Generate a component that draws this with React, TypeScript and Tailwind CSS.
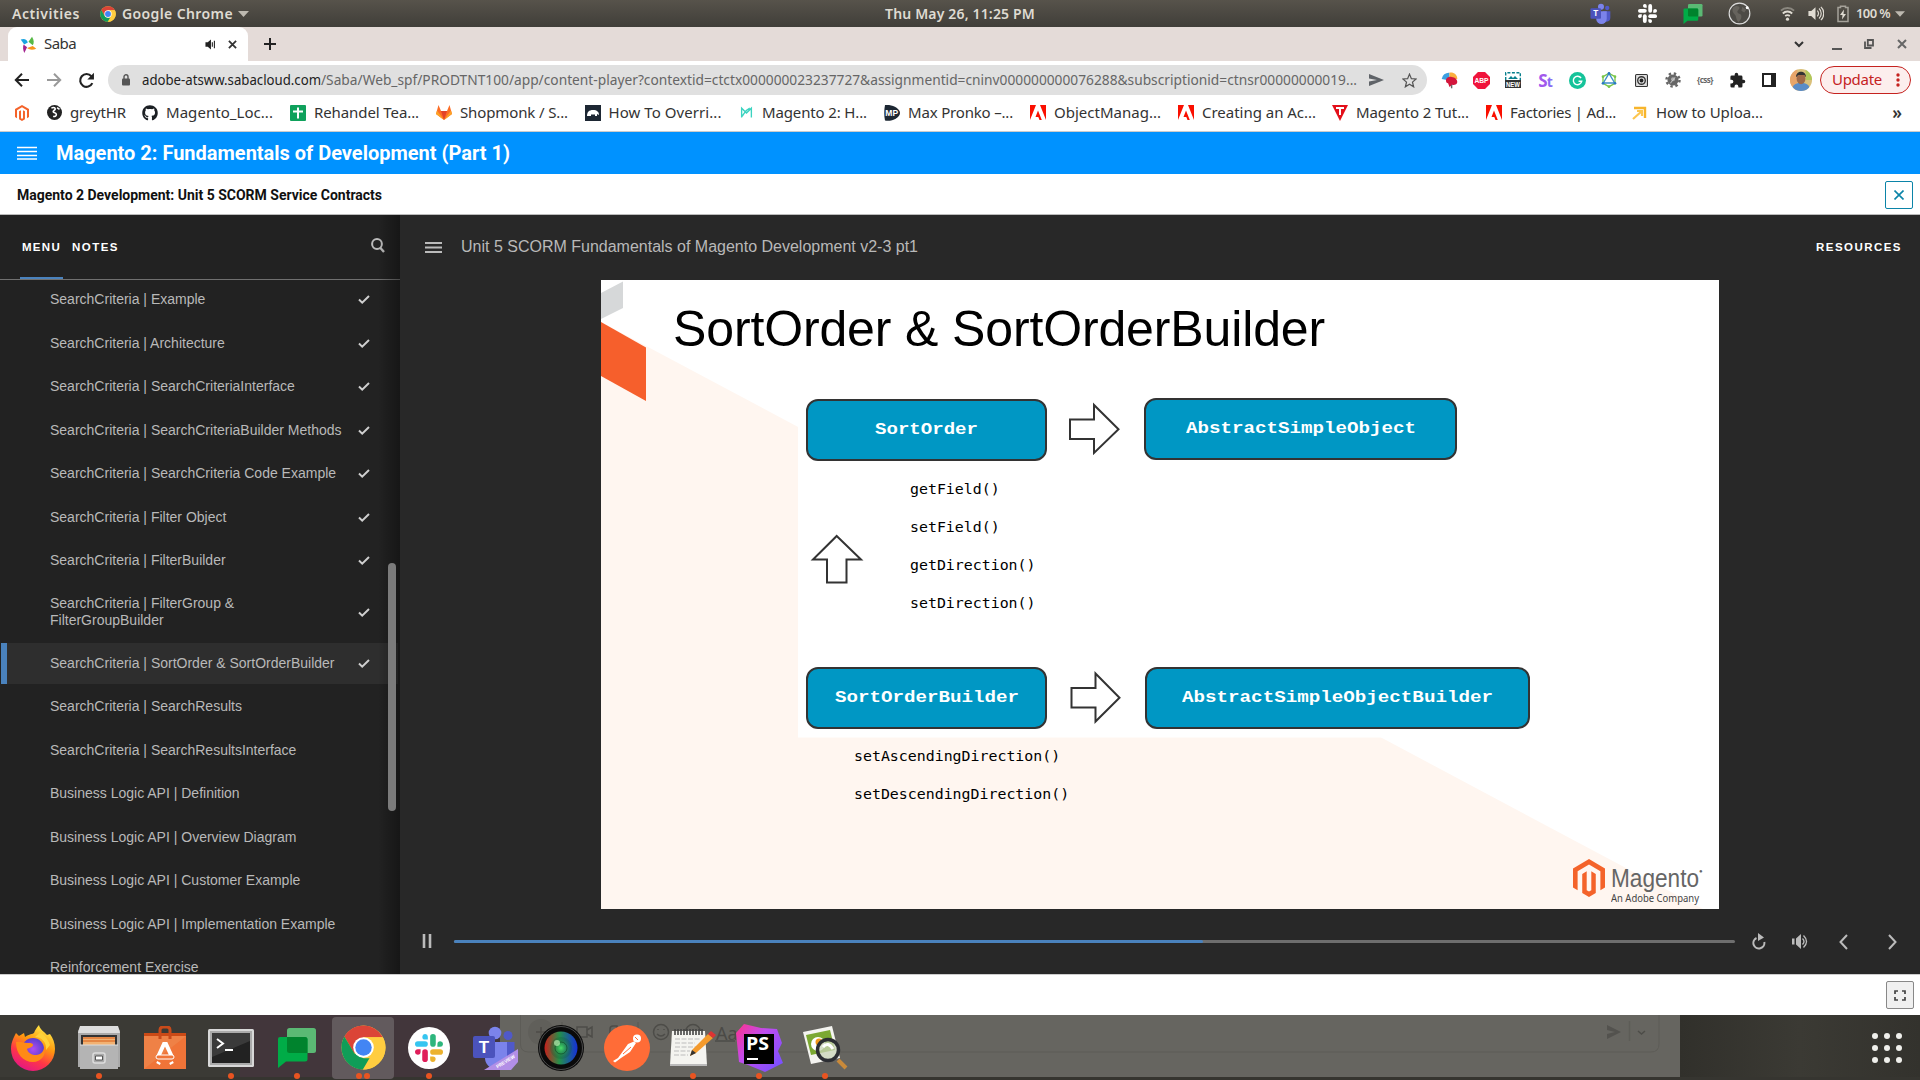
import React, { useLayoutEffect, useRef, useState } from "react";
import { FaGithub, FaGitlab } from "react-icons/fa";

/* Text set to a given width by adjusting its tracking, or its horizontal scale when `squeeze` is on. */
function Fit({ w, children, className = "", squeeze = false }: { w: number; children: string; className?: string; squeeze?: boolean }) {
  const ref = useRef<HTMLSpanElement>(null);
  const [style, setStyle] = useState<React.CSSProperties>({});
  useLayoutEffect(() => {
    const el = ref.current;
    if (!el) return;
    const natural = el.getBoundingClientRect().width;
    if (squeeze) setStyle({ transform: `scaleX(${w / natural})`, transformOrigin: "0 50%" });
    else setStyle({ letterSpacing: `${(w - natural) / children.length}px` });
  }, []);
  return (
    <span className={"block shrink-0 " + className} style={{ width: w }}>
      <span ref={ref} className="inline-block whitespace-pre" style={style}>
        {children}
      </span>
    </span>
  );
}

const Svg = ({ s = 16, h, box = "0 0 24 24", className = "", children }: { s?: number; h?: number; box?: string; className?: string; children: React.ReactNode }) => (
  <svg width={s} height={h ?? s} viewBox={box} className={"block shrink-0 " + className} fill="none">
    {children}
  </svg>
);

function MagentoMark({ s = 16, h = 18 }: { s?: number; h?: number }) {
  return (
    <svg width={s} height={h} viewBox="1.6 0 20.8 24" preserveAspectRatio="none" className="block shrink-0" fill="#f4632a">
      <path d="M12 0 22.4 6v12l-3 1.7V7.7L12 3.4 4.6 7.7v12l-3-1.7V6z" />
      <path d="M12 24l-4.4-2.5V9.4l2.9-1.7v12l1.5.9 1.5-.9v-12l2.9 1.7v12.1z" />
    </svg>
  );
}

function Chrome({ s }: { s: number }) {
  return (
    <Svg s={s} box="0 0 48 48">
      <circle cx="24" cy="24" r="23.5" fill="#ffcd40" />
      <path d="M24 .5A23.5 23.5 0 0 1 44.700 13H24L14 30 3.6 12.3A23.5 23.5 0 0 1 24 .5z" fill="#db4437" />
      <path d="M3.6 12.3 14.2 30 24 35.5h10L23.6 47.5A23.5 23.5 0 0 1 3.6 12.3z" fill="#0f9d58" />
      <path d="M24 13h20.7A23.5 23.5 0 0 1 23.3 47.5L33.8 29.5z" fill="#ffcd40" />
      <circle cx="24" cy="24" r="11" fill="#fff" />
      <circle cx="24" cy="24" r="8.8" fill="#4285f4" />
    </Svg>
  );
}

function SlackMark({ s, mono = false }: { s: number; mono?: boolean }) {
  const [b, g, y, r] = mono ? ["#fff", "#fff", "#fff", "#fff"] : ["#36c5f0", "#2eb67d", "#ecb22e", "#e01e5a"];
  return (
    <Svg s={s}>
      <g fill={b}><rect x="0" y="6.2" width="11" height="4.8" rx="2.4" /><path d="M8.8 0a2.4 2.4 0 0 1 2.2 2.4v2.4H8.6A2.4 2.4 0 0 1 8.8 0z" /></g>
      <g fill={g}><rect x="13" y="0" width="4.8" height="11" rx="2.4" /><path d="M24 8.8A2.4 2.4 0 0 1 21.6 11h-2.4V8.6a2.4 2.4 0 0 1 4.8.2z" /></g>
      <g fill={y}><rect x="13" y="13" width="11" height="4.8" rx="2.4" /><path d="M15.2 24a2.4 2.4 0 0 1-2.2-2.4v-2.4h2.4a2.4 2.4 0 0 1-.2 4.8z" /></g>
      <g fill={r}><rect x="6.2" y="13" width="4.8" height="11" rx="2.4" /><path d="M0 15.2A2.4 2.4 0 0 1 2.4 13h2.4v2.4a2.4 2.4 0 0 1-4.8-.2z" /></g>
    </Svg>
  );
}

function ChatMark({ w, h }: { w: number; h: number }) {
  return (
    <Svg s={w} h={h} box="0 0 38 40">
      <rect x="9" y="0" width="29" height="25" rx="2.5" fill="#5bb974" />
      <path d="M2 9h25a2.500 2.500 0 0 1 2.500 2.500V31a2.500 2.500 0 0 1-2.500 2.500H8L0 40V11a2 2 0 0 1 2-2z" fill="#00ac47" />
      <path d="M9 9h18a2.500 2.500 0 0 1 2.500 2.500V25H11.500A2.500 2.500 0 0 1 9 22.500z" fill="#00832d" />
    </Svg>
  );
}

function TeamsMark({ s, preview = false }: { s: number; preview?: boolean }) {
  return (
    <Svg s={s} box="0 0 46 46">
      <circle cx="36" cy="10.500" r="4.500" fill="#5059c9" />
      <path d="M27 17h15.500v14a8 8 0 0 1-8 8H27z" fill="#5059c9" />
      <circle cx="23" cy="8" r="6.300" fill="#7b83eb" />
      <path d="M13 17h22v16a11 11 0 0 1-22 0z" fill="#7b83eb" />
      <rect x="1" y="11" width="22" height="22" rx="2" fill="#4b53bc" />
      <text x="12" y="28" textAnchor="middle" fontFamily="Liberation Sans" fontWeight="700" fontSize="17" fill="#fff">T</text>
      {preview && (
        <>
          <path d="M12 45 46 24v13l-7 8z" fill="#b28fe6" />
          <text transform="translate(25.500 43.500) rotate(-32)" fontFamily="Liberation Sans" fontWeight="700" fontSize="5" textLength="21" lengthAdjust="spacingAndGlyphs" fill="#fff">PREVIEW</text>
        </>
      )}
    </Svg>
  );
}

const Cell = ({ w = 32, children }: { w?: number; children: React.ReactNode }) => (
  <div className="flex shrink-0 items-center justify-center" style={{ width: w }}>{children}</div>
);

const Speaker = ({ s, c }: { s: number; c: string }) => (
  <Svg s={s}>
    <path d="M2 8.500h4L12 3v18l-6-5.500H2z" fill={c} />
    <path d="M14.500 8a5.500 5.500 0 0 1 0 8M17 5a9.500 9.500 0 0 1 0 14M19.600 2.600a13 13 0 0 1 0 18.800" stroke={c} strokeWidth="1.700" />
  </Svg>
);

function TopBar() {
  return (
    <div className="flex h-[27px] shrink-0 items-center bg-gradient-to-b from-[#57534b] to-[#403e39] text-[14px] font-semibold text-[#dfdbd2]">
      <div className="flex w-[885px] items-center pl-3">
        <Fit w={68}>Activities</Fit>
        <div className="ml-5 mr-[6px]"><Chrome s={16} /></div>
        <Fit w={111}>Google Chrome</Fit>
        <Svg s={11} h={6} box="0 0 11 6" className="ml-[5px]"><path d="M0 0h11L5.500 6z" fill="#bdb9b0" /></Svg>
      </div>
      <Fit w={150} className="-mt-px">Thu May 26, 11:25 PM</Fit>
      <div className="ml-[543px] flex items-center">
        <Cell w={46}><TeamsMark s={22} /></Cell>
        <Cell w={46}><SlackMark s={19} mono /></Cell>
        <Cell w={46}><ChatMark w={20} h={20} /></Cell>
        <Cell w={46}>
          <Svg s={23}><circle cx="12" cy="12" r="10.800" fill="#4d4b46" stroke="#ddd" strokeWidth="1.200" /><path d="M5 6c3-3 7-2 7 0s-3 3-2 5 4 1 4 4-2 5-3 6c-3-3-2-6-4-8S4 9 5 6zM15 5l4 3-2 3-3-2z" fill="#66635d" /><circle cx="20" cy="6" r="1.500" fill="#fff" /></Svg>
        </Cell>
        <div className="ml-[18px] w-[27px]"><Svg s={15} box="0 0 16 16"><path d="M1 5a10 10 0 0 1 14 0" stroke="#8a877f" strokeWidth="2" /><path d="M3 8a7 7 0 0 1 10 0" stroke="#dfdbd2" strokeWidth="2" /><path d="M5.500 10.700a4 4 0 0 1 5 0" stroke="#dfdbd2" strokeWidth="1.800" /><circle cx="8" cy="14" r="1.700" fill="#dfdbd2" /></Svg></div>
        <div className="w-[30px]"><Speaker s={17} c="#dfdbd2" /></div>
        <Svg s={12} h={18} box="0 0 12 17"><path d="M3.500 2V.8h5V2H11v14H1V2z" stroke="#a5a29a" strokeWidth="1.500" /><path d="M7 4 3 9.500h2.500L5 14l4-5.500H6.500z" fill="#dfdbd2" /></Svg>
        <Fit w={34} className="ml-[7px] text-[13px]">100 %</Fit>
        <Svg s={10} h={6} box="0 0 11 6" className="ml-[5px]"><path d="M0 0h11L5.500 6z" fill="#bdb9b0" /></Svg>
      </div>
    </div>
  );
}

function TabStrip() {
  return (
    <div className="flex h-[34px] shrink-0 items-center bg-[#e4dbd8] pl-2 text-[15px] text-[#333]">
      <div className="flex h-full w-[240px] items-center rounded-t-[9px] bg-white pl-3">
        <Svg s={17}>
          <path d="M1 5c5-2 9 0 10 4L6 12z" fill="#1ba4e0" /><path d="M5 12l5 4-4 8c-2-5-2-8-1-12z" fill="#a3238e" />
          <path d="M10 17l8-3 5 4c-5 2-9 2-13-1z" fill="#f7941e" /><path d="M12 8l5-7c3 5 3 9 1 12z" fill="#57b947" />
        </Svg>
        <Fit w={32} className="-mt-[2px] ml-[7px]">Saba</Fit>
        <Svg s={11} className="ml-[129px]"><path d="M1 7h5l7-6v22l-7-6H1z" fill="#222" /><path d="M16 7v10M20.500 4v16" stroke="#222" strokeWidth="2.400" /></Svg>
        <Svg s={9} box="0 0 10 10" className="ml-3"><path d="M1 1l8 8M9 1 1 9" stroke="#333" strokeWidth="2" /></Svg>
      </div>
      <Svg s={12} box="0 0 12 12" className="ml-4"><path d="M6 0v12M0 6h12" stroke="#222" strokeWidth="2" /></Svg>
      <div className="ml-auto flex items-center pr-[13px]">
        <Svg s={10} h={7} box="0 0 10 7" className="mr-[28px]"><path d="M1 1l4 4 4-4" stroke="#333" strokeWidth="2" /></Svg>
        <Svg s={10} h={11} box="0 0 10 11" className="mr-[22px]"><path d="M0 10h10" stroke="#555" strokeWidth="2" /></Svg>
        <Svg s={10} box="0 0 10 10" className="mr-[23px]"><path d="M3.800 1h5.200v5.500H3.800zM1 2.500V9h6.500" stroke="#555" strokeWidth="1.800" /></Svg>
        <Svg s={10} box="0 0 10 10"><path d="M1 1l8 8M9 1 1 9" stroke="#666" strokeWidth="2" /></Svg>
      </div>
    </div>
  );
}

function Toolbar() {
  return (
    <div className="flex h-[37px] shrink-0 items-center bg-white pb-px pt-0.5 text-[15px]">
      <div className="ml-[14px] w-[32px]"><Svg s={16} box="0 0 16 16"><path d="M15 8H2M8 1.800 1.800 8 8 14.200" stroke="#222" strokeWidth="2" /></Svg></div>
      <div className="w-[32px]"><Svg s={16} box="0 0 16 16"><path d="M1 8h13M8 1.800 14.200 8 8 14.200" stroke="#999" strokeWidth="2" /></Svg></div>
      <Svg s={17} box="0 0 16 16"><path d="M13.500 10.500A6 6 0 1 1 12.600 4" stroke="#222" strokeWidth="2" /><path d="M15 .8V7H8.800z" fill="#222" /></Svg>
      <div className="ml-[13px] flex h-[30px] w-[1319px] shrink-0 items-center rounded-full bg-[#e0e0e0] pl-[14px]">
        <Svg s={8} h={12} box="0 0 8 12"><path d="M2 5V2.800a2 2 0 0 1 4 0V5" stroke="#555" strokeWidth="1.400" /><rect y="4.500" width="8" height="7" rx="1" fill="#555" /></Svg>
        <Fit w={179} squeeze className="-mt-px ml-[12px] text-[#222]">adobe-atsww.sabacloud.com</Fit>
        <Fit w={1036} squeeze className="-mt-px text-[#666]">/Saba/Web_spf/PRODTNT100/app/content-player?contextid=ctctx000000023237727&assignmentid=cninv000000000076288&subscriptionid=ctnsr00000000019...</Fit>
        <Svg s={15} h={12} box="0 0 15 12" className="ml-[12px]"><path d="M0 0l15 6-15 6V7.500L8 6 0 4.500z" fill="#5f6368" /></Svg>
        <Svg s={15} className="ml-[18px]"><path d="M12 1.800l3 7.200 7.600.6-5.800 5 1.800 7.500L12 18l-6.600 4.100 1.800-7.500-5.800-5L9 9z" stroke="#555" strokeWidth="2" /></Svg>
      </div>
      <div className="ml-[6px] flex items-center">
        <Cell><Svg s={17}><path d="M12 1a10 10 0 0 0-11 9l11 2z" fill="#3b9fe0" /><path d="M12 1c6-1 11 3 11 9l-11 2z" fill="#fbb040" /><path d="M7 12c0-5 6-6 8-5 5 0 8 4 8 7s-4 5-7 4l-4 3-2-5c-2 0-3-2-3-4z" fill="#d3163c" /><path d="M15 18v5" stroke="#666" strokeWidth="2" /></Svg></Cell>
        <Cell><Svg s={17}><path d="M7 0h10l7 7v10l-7 7H7l-7-7V7z" fill="#f0143c" /><text x="12" y="16" textAnchor="middle" fontSize="10.500" fontWeight="700" fontFamily="Liberation Sans" textLength="20" lengthAdjust="spacingAndGlyphs" fill="#fff">ABP</text></Svg></Cell>
        <Cell><Svg s={16} box="0 0 16 16"><path d="M.7 8V.7h14.600V8" stroke="#087f8c" strokeWidth="1.400" strokeDasharray="3 1.500" /><path d="M3 7l3-3 2 2 2-2 3 3z" fill="#087f8c" /><rect y="8" width="16" height="8" fill="#333" /><text x="8" y="14.800" textAnchor="middle" fontSize="7.500" fontWeight="700" fontFamily="Liberation Sans" textLength="14" lengthAdjust="spacingAndGlyphs" fill="#fff">NEW</text></Svg></Cell>
        <Cell><span className="text-[17px] font-bold leading-none tracking-[-1px] text-[#a259ec]">S<span className="text-[14px] text-[#8a6cf5]">t</span></span></Cell>
        <Cell><Svg s={17}><circle cx="12" cy="12" r="12" fill="#15c39a" /><path d="M17 8.500A6 6 0 1 0 18 13h-4.500" stroke="#fff" strokeWidth="2" /></Svg></Cell>
        <Cell><Svg s={16}><path d="M12 2l9 5v10l-9 5-9-5V7z" stroke="#7ac64a" strokeWidth="2" /><path d="M12 2l8.500 14.500h-17z" stroke="#3e8fc8" strokeWidth="2" /><g fill="#2b7abf"><circle cx="12" cy="2" r="2" /><circle cx="21" cy="17" r="2" /><circle cx="3" cy="17" r="2" /></g><g fill="#7ac64a"><circle cx="12" cy="22" r="2" /><circle cx="21" cy="7" r="2" /><circle cx="3" cy="7" r="2" /></g></Svg></Cell>
        <Cell><Svg s={13}><rect x="1" y="1" width="22" height="22" rx="2" fill="#ddd" stroke="#333" strokeWidth="2" /><circle cx="12" cy="12" r="7" stroke="#333" strokeWidth="2.500" /><circle cx="12" cy="12" r="3.500" fill="#222" /></Svg></Cell>
        <Cell><Svg s={16}><circle cx="12" cy="12" r="8.300" fill="#666" /><circle cx="12" cy="12" r="9.800" stroke="#666" strokeWidth="3.600" strokeDasharray="3.600 4.100" /><circle cx="12" cy="11" r="3" fill="#aaa" /><path d="M8 17l7-9" stroke="#ccc" strokeWidth="1.500" /></Svg></Cell>
        <Cell><span className="text-[8px] font-bold tracking-[-0.500px] text-[#666]">{"{css}"}</span></Cell>
        <Cell><Svg s={17}><path d="M20.500 11H19V7a2 2 0 0 0-2-2h-4V3.500a2.500 2.500 0 0 0-5 0V5H4a2 2 0 0 0-2 2v3.800h1.500a2.700 2.700 0 0 1 0 5.400H2V20a2 2 0 0 0 2 2h3.800v-1.500a2.700 2.700 0 0 1 5.400 0V22H17a2 2 0 0 0 2-2v-4h1.500a2.500 2.500 0 0 0 0-5z" fill="#222" /></Svg></Cell>
        <Cell><Svg s={14} box="0 0 14 14"><rect x="1" y="1" width="12" height="12" stroke="#222" strokeWidth="2" /><rect x="9" y="1" width="4" height="12" fill="#222" /></Svg></Cell>
        <Cell><Svg s={22}><clipPath id="avatar"><circle cx="12" cy="12" r="12" /></clipPath><g clipPath="url(#avatar)"><path d="M0 0h24v24H0z" fill="#d9c07a" /><path d="M0 0h8v24H0z" fill="#e8a56a" /><path d="M17 0h7v12h-7z" fill="#b0c85a" /><path d="M2 24c0-7 5-9 10-9s10 2 10 9z" fill="#5a8cc8" /><ellipse cx="12" cy="10.500" rx="4.800" ry="6" fill="#a06a48" /><path d="M6.500 9c0-8 11-8 11 0l-2-2.500H9z" fill="#333" /></g></Svg></Cell>
      </div>
      <div className="ml-[3px] flex h-[28px] w-[91px] items-center rounded-full border border-[#c5221f] bg-[#fceeed] pl-[11px] text-[#c5221f]">
        <Fit w={50} className="-mt-px">Update</Fit>
        <Svg s={4} h={14} box="0 0 4 14" className="ml-[14px]"><g fill="#c5221f"><circle cx="2" cy="2" r="1.700" /><circle cx="2" cy="7" r="1.700" /><circle cx="2" cy="12" r="1.700" /></g></Svg>
      </div>
    </div>
  );
}

const Adobe = () => (
  <Svg s={16} h={15} box="0 0 16 15"><path d="M0 0h6L0 15zM10 0h6v15zM8 5.500 11.800 15H9.500L8.300 12H5.500z" fill="#fa0f00" /></Svg>
);

const bookmarks: { icon: React.ReactNode; text: string; w: number; slot: number }[] = [
  { icon: <Svg s={15}><circle cx="12" cy="12" r="12" fill="#222" /><path d="M7 5c4-2 7 0 6 2s-4 2-3 4 5 1 5 4-3 4-5 3M16 4l4 3" stroke="#fff" strokeWidth="2.500" /></Svg>, text: "greytHR", w: 56, slot: 96 },
  { icon: <FaGithub size={16} color="#1b1f23" />, text: "Magento_Loc...", w: 107, slot: 148 },
  { icon: <Svg s={16} box="0 0 16 16"><rect width="16" height="16" rx="1" fill="#0fa15c" /><path d="M8 2.500v11M3 6.500h10" stroke="#fff" strokeWidth="2" /></Svg>, text: "Rehandel Tea...", w: 105, slot: 146 },
  { icon: <Svg s={16} h={15} box="0 0 16 15"><path d="M8 15 0 9l2.500-9L5 6h6l2.500-6L16 9z" fill="#fc6d26" /><path d="M8 15 5 6h6z" fill="#e24329" /><path d="M8 15 0 9l1-3.500zM8 15l8-6-1-3.500z" fill="#fca326" /></Svg>, text: "Shopmonk / S...", w: 108, slot: 148.500 },
  { icon: <Svg s={16} box="0 0 16 16"><rect width="16" height="16" fill="#1d2733" /><path d="M2 11c0-4 2-6 6-6s6 2 6 5l-2-1v2h-2V9.500H6V11z" fill="#fff" /></Svg>, text: "How To Overri...", w: 113, slot: 153.500 },
  { icon: <Svg s={13}><path d="M3 21V4l9 9 9-9v17M3 20c5-5 6-12 15-16" stroke="#3cd3c0" strokeWidth="2.500" /></Svg>, text: "Magento 2: H...", w: 105, slot: 146 },
  { icon: <Svg s={16} box="0 0 16 16"><path d="M1 0c6-1 15 3 15 8S7 17 1 15.500Q-.5 8 1 0z" fill="#1d2733" /><text x="7.700" y="11" textAnchor="middle" fontSize="8.500" fontWeight="700" fontFamily="Liberation Sans" fill="#fff">MP</text></Svg>, text: "Max Pronko –...", w: 105, slot: 146 },
  { icon: <Adobe />, text: "ObjectManag...", w: 107, slot: 148 },
  { icon: <Adobe />, text: "Creating an Ac...", w: 114, slot: 154 },
  { icon: <Svg s={16} box="0 0 16 16"><path d="M0 0h16L8 16z" fill="#e3101a" /><path d="M4 3h8M8 3v7" stroke="#fff" strokeWidth="2" /></Svg>, text: "Magento 2 Tut...", w: 113, slot: 154 },
  { icon: <Adobe />, text: "Factories | Ad...", w: 106, slot: 146 },
  { icon: <Svg s={16} box="0 0 16 16"><path d="M2 3h11v10" stroke="#f7b52c" strokeWidth="2.400" /><path d="M1 14l9-8M5 6h5v5" stroke="#fcc650" strokeWidth="2.200" /></Svg>, text: "How to Uploa...", w: 107, slot: 148 },
];

function Bookmarks() {
  return (
    <div className="flex h-[34px] shrink-0 items-center border-b border-[#ccc] bg-white pb-[4px] text-[15px] text-[#333]">
      <div className="ml-[15px] mr-[24px]"><MagentoMark s={14} h={16} /></div>
      <div className="-ml-[7px] flex">
        {bookmarks.map((b) => (
          <div key={b.text} className="flex items-center" style={{ width: b.slot }}>
            <div className="mr-2 flex w-4 justify-center">{b.icon}</div>
            <Fit w={b.w} className="-mt-px">{b.text}</Fit>
          </div>
        ))}
      </div>
      <span className="ml-auto mr-[18px] text-[17px] font-semibold leading-none">»</span>
    </div>
  );
}

function CourseHeader() {
  return (
    <>
      <div className="flex h-[42px] shrink-0 items-center bg-[#0092ff] pl-[17px] font-[Roboto] text-white">
        <Svg s={20} h={14} box="0 0 20 14"><path d="M0 1.500h20M0 5.500h20M0 9.500h20M0 13h20" stroke="#fff" strokeWidth="1.300" /></Svg>
        <Fit w={454} className="ml-[19px] text-[20px] font-bold">Magento 2: Fundamentals of Development (Part 1)</Fit>
      </div>
      <div className="flex h-[41px] shrink-0 items-center border-b border-[#bbb] bg-white pl-[17px] pr-[7px] pt-px font-[Roboto] text-[14px] font-bold text-[#111]">
        <Fit w={365} className="mt-px">Magento 2 Development: Unit 5 SCORM Service Contracts</Fit>
        <div className="ml-auto flex h-7 w-7 items-center justify-center rounded-[2px] border border-[#0b84a8]">
          <Svg s={10} box="0 0 10 10"><path d="M.5.500l9 9M9.500.500l-9 9" stroke="#0b84a8" strokeWidth="1.600" /></Svg>
        </div>
      </div>
    </>
  );
}

const lessons: { text: string; done?: boolean; active?: boolean; tall?: boolean }[] = [
  { text: "SearchCriteria | Example", done: true },
  { text: "SearchCriteria | Architecture", done: true },
  { text: "SearchCriteria | SearchCriteriaInterface", done: true },
  { text: "SearchCriteria | SearchCriteriaBuilder Methods", done: true },
  { text: "SearchCriteria | SearchCriteria Code Example", done: true },
  { text: "SearchCriteria | Filter Object", done: true },
  { text: "SearchCriteria | FilterBuilder", done: true },
  { text: "SearchCriteria | FilterGroup &\nFilterGroupBuilder", done: true, tall: true },
  { text: "SearchCriteria | SortOrder & SortOrderBuilder", done: true, active: true },
  { text: "SearchCriteria | SearchResults" },
  { text: "SearchCriteria | SearchResultsInterface" },
  { text: "Business Logic API | Definition" },
  { text: "Business Logic API | Overview Diagram" },
  { text: "Business Logic API | Customer Example" },
  { text: "Business Logic API | Implementation Example" },
  { text: "Reinforcement Exercise" },
];

function Sidebar() {
  return (
    <div className="relative flex w-[400px] shrink-0 flex-col overflow-hidden bg-[#222]">
      <div className="flex h-[65px] shrink-0 border-b border-[#707070] text-[11.500px] font-bold text-white">
        <div className="ml-5 flex w-[43px] flex-col items-center border-b-2 border-[#4a82bd] pt-[24px]"><Fit w={39}>MENU</Fit></div>
        <Fit w={47} className="ml-[9px] pt-[24px]">NOTES</Fit>
        <Svg s={14} h={15} box="0 0 14 15" className="ml-auto mr-[15px] mt-[23px]"><circle cx="6" cy="6" r="4.900" stroke="#bbb" strokeWidth="2" /><path d="M9 9.500l4 4.500" stroke="#bbb" strokeWidth="2.400" /></Svg>
      </div>
      <div className="min-h-0 flex-1 overflow-hidden">
        <div className="-mt-[2px]">
          {lessons.map((l) => (
            <div key={l.text} className={l.tall ? "flex h-[59px] items-center" : "flex h-[43.500px] items-center"}>
              <div className={l.active ? "ml-px flex h-[41px] w-[397px] items-center border-l-[6px] border-[#4a82bd] bg-[#2e2e2e] pl-[43px]" : "flex h-[41px] w-[398px] items-center pl-[50px]"}>
                <span className="w-[308px] whitespace-pre text-[14px] leading-[16.800px] text-[#b9b9b9]">{l.text}</span>
                {l.done && <Svg s={12} h={9} box="0 0 12 9"><path d="M1 4.500 4.200 7.600 11 1" stroke="#cfcfcf" strokeWidth="2" /></Svg>}
              </div>
            </div>
          ))}
        </div>
      </div>
      <div className="pointer-events-none absolute inset-y-0 right-0 w-[22px] bg-gradient-to-r from-transparent to-black/35" />
      <div className="absolute right-1 top-[348px] h-[248px] w-2 rounded-full bg-[#7b7b7b]" />
    </div>
  );
}

const nodes = [
  { cls: "left-[205px] top-[119px] w-[241px]", text: "SortOrder", w: 103 },
  { cls: "left-[543px] top-[118px] w-[313px]", text: "AbstractSimpleObject", w: 230 },
  { cls: "left-[205px] top-[387px] w-[241px]", text: "SortOrderBuilder", w: 184 },
  { cls: "left-[544px] top-[387px] w-[385px]", text: "AbstractSimpleObjectBuilder", w: 311 },
];

const methods = [
  { cls: "left-[309px] top-[199px]", text: "getField()" },
  { cls: "left-[309px] top-[237px]", text: "setField()" },
  { cls: "left-[309px] top-[275px]", text: "getDirection()" },
  { cls: "left-[309px] top-[313px]", text: "setDirection()" },
  { cls: "left-[253px] top-[466px]", text: "setAscendingDirection()" },
  { cls: "left-[253px] top-[504px]", text: "setDescendingDirection()" },
];

function Slide() {
  return (
    <div className="relative ml-[201px] h-[629px] w-[1118px] shrink-0 overflow-hidden bg-white text-black">
      <svg width="1118" height="629" viewBox="0 0 1118 629" className="absolute inset-0">
        <path d="M0 42 1102 629H0z" fill="#fff6f0" />
        <path d="M197 60h620v397.500H197z" fill="#fff" />
        <path d="M0 42 45 67.500V121L0 96z" fill="#f65f2c" />
        <path d="M0 13 22 1.500V28L0 39z" fill="#d6d8d9" />
        <g fill="#fff" stroke="#333" strokeWidth="2">
          <path d="M469 139.500h24V125l24.500 24.300L493 173v-14h-24z" />
          <path d="M470.500 408h24V393.500l24 24.300L494.500 441.500v-14h-24z" />
          <path d="M235.700 256 260 279.500h-14.500V302.500h-19.500V279.500H212z" />
        </g>
      </svg>
      <Fit w={652} className="absolute left-[72px] top-[19px] text-[50px] leading-[60px]">SortOrder & SortOrderBuilder</Fit>
      {nodes.map((n) => (
        <div key={n.text} className={"absolute flex h-[62px] items-center justify-center rounded-[12px] border-2 border-[#333] bg-[#0097c4] font-['Liberation_Mono'] text-[17px] font-bold text-white " + n.cls}>
          <Fit w={n.w} squeeze>{n.text}</Fit>
        </div>
      ))}
      {methods.map((m) => (
        <span key={m.text} className={"absolute font-['DejaVu_Sans_Mono'] text-[14.900px] leading-[20px] " + m.cls}>{m.text}</span>
      ))}
      <div className="absolute left-[972px] top-[579px]"><MagentoMark s={32} h={38} /></div>
      <Fit w={88} squeeze className="absolute left-[1010px] top-[582px] text-[26px] leading-[32px] text-[#666]">Magento</Fit>
      <Fit w={88} squeeze className="absolute left-[1010px] top-[611px] font-['Noto_Sans'] text-[11px] leading-[14px] text-[#444]">An Adobe Company</Fit>
      <span className="absolute left-[1098px] top-[588px] text-[6px] leading-none text-[#666]">●</span>
    </div>
  );
}

function Player() {
  return (
    <div className="flex min-w-0 flex-1 flex-col bg-[#282828] text-[#b9b9b9]">
      <div className="flex h-[65px] shrink-0 items-center pl-[25px] pr-[18px]">
        <Svg s={17} h={11} box="0 0 17 11" className="-mt-px"><path d="M0 1h17M0 5.500h17M0 10h17" stroke="#bbb" strokeWidth="2" /></Svg>
        <Fit w={457} className="-mt-[2px] ml-[19px] text-[16px]">Unit 5 SCORM Fundamentals of Magento Development v2-3 pt1</Fit>
        <Fit w={86} className="ml-auto mt-px text-[11.500px] font-bold text-white">RESOURCES</Fit>
      </div>
      <Slide />
      <div className="flex h-[65px] items-center pb-px pl-[22px]">
        <Svg s={10} h={14} box="0 0 10 14"><path d="M2 0v14M8 0v14" stroke="#bbb" strokeWidth="2.600" /></Svg>
        <div className="ml-[22px] h-[3px] w-[1281px] rounded-full bg-[#6e6e6e]"><div className="h-full w-[749px] rounded-full bg-[#4a82bd]" /></div>
        <Svg s={14} h={17} box="0 0 14 17" className="ml-[17px]"><path d="M4.500 5A5.500 5.500 0 1 0 12.300 9" stroke="#bbb" strokeWidth="2" /><path d="M6 0l6 4.500-6 3.500z" fill="#bbb" /></Svg>
        <Svg s={17} h={15} box="0 0 17 15" className="ml-[26px]"><path d="M0 4.500h2.500v6H0zM4 4.500 9 0v15l-5-4.500z" fill="#bbb" /><path d="M10.500 4.500q3 3 0 6M11.500 1.500q6 6 0 12" stroke="#bbb" strokeWidth="1.400" /></Svg>
        <Svg s={9} h={16} box="0 0 9 16" className="ml-[30px] mt-[2px]"><path d="M8 1 1.500 8 8 15" stroke="#bbb" strokeWidth="2" /></Svg>
        <Svg s={9} h={16} box="0 0 9 16" className="ml-[40px] mt-[2px]"><path d="M1 1l6.500 7L1 15" stroke="#bbb" strokeWidth="2" /></Svg>
      </div>
    </div>
  );
}

const dock: { name: string; dots: number; active?: boolean; icon: React.ReactNode }[] = [
  { name: "firefox", dots: 0, icon: (
    <Svg s={46} box="0 0 46 46">
      <defs>
        <linearGradient id="fx" x1=".8" y1="0" x2=".3" y2="1"><stop offset="0" stopColor="#fff44f" /><stop offset=".4" stopColor="#ff980e" /><stop offset=".7" stopColor="#ff3647" /><stop offset="1" stopColor="#e31587" /></linearGradient>
        <radialGradient id="fxc"><stop offset="0" stopColor="#b04cf0" /><stop offset="1" stopColor="#5a3fd0" /></radialGradient>
      </defs>
      <path d="M29 0c1 5 5 6 8 10l3-1c3 4 5 9 5 15a22 22 0 0 1-44 0C1 17 4 12 6 8l3 3 5-3 1 4c4-3 8-3 9-4 1-3 3-6 5-8z" fill="url(#fx)" />
      <circle cx="23" cy="24" r="11" fill="url(#fxc)" />
      <path d="M6 17c5-1 8 1 11 1s6 0 6 2-4 3-6 4c1 4 5 6 9 6 5 0 8-4 8-8 3 8-3 15-11 15C13 37 6 29 6 17z" fill="#ff8a16" />
      <path d="M25 12c7 0 12 6 11 13l4-5c-2-7-7-10-9-13z" fill="#ffd23a" />
    </Svg>) },
  { name: "files", dots: 1, icon: (
    <Svg s={42} h={44} box="0 0 42 44">
      <path d="M2 1h38l2 4v36H0V5z" fill="#aaa" /><path d="M2 0h38l2 7H0z" fill="#ddd" /><path d="M3 9h36v11H3z" fill="#333" /><path d="M5 11h32v8H5z" fill="#f2b273" /><path d="M5 12h32M5 15h32" stroke="#d65a16" /><path d="M2 19h38v24H2z" fill="#b4b4b4" /><path d="M2 19h38" stroke="#ddd" /><rect x="15" y="27" width="12" height="10" rx="2" fill="#aaa" stroke="#ddd" strokeWidth="1.500" /><path d="M17.500 30h7v4h-7z" fill="#fff" stroke="#555" />
    </Svg>) },
  { name: "software", dots: 0, icon: (
    <Svg s={42} h={44} box="0 0 42 44">
      <path d="M0 7h42v4H0z" fill="#cb4a16" /><path d="M0 10h42v33H0z" fill="#f07438" /><path d="M0 10h42L0 43z" fill="#ee8b50" opacity=".6" /><path d="M16 13V4q0-3 3-3h4q3 0 3 3v9" stroke="#c94a1a" strokeWidth="3" /><path d="M14 31 20 18h2l6 13M15 36l-1 2M27 36l1 2" stroke="#fff" strokeWidth="4" /><rect x="12" y="29" width="18" height="4" rx="2" fill="#f07438" stroke="#fff" />
    </Svg>) },
  { name: "terminal", dots: 1, icon: (
    <Svg s={46} h={38} box="0 0 46 38">
      <rect width="46" height="38" rx="1.500" fill="#d8d8d8" /><rect x="2" y="2" width="42" height="34" fill="#aaa" /><rect x="4" y="4" width="38" height="30" fill="#222" /><path d="M4 4h38v8L4 28z" fill="#444" opacity=".7" /><path d="M9 10l6 4.500L9 19M17 21h8" stroke="#fff" strokeWidth="2" />
    </Svg>) },
  { name: "chat", dots: 1, icon: <ChatMark w={38} h={40} /> },
  { name: "chrome", dots: 2, active: true, icon: <Chrome s={45} /> },
  { name: "slack", dots: 1, icon: <div className="flex h-[42px] w-[42px] items-center justify-center rounded-full bg-white"><SlackMark s={28} /></div> },
  { name: "teams", dots: 0, icon: <TeamsMark s={46} preview /> },
  { name: "camera", dots: 0, icon: (
    <Svg s={46} box="0 0 46 46">
      <defs><linearGradient id="lens"><stop offset="0" stopColor="#c8201c" /><stop offset=".45" stopColor="#23904a" /><stop offset="1" stopColor="#1530d8" /></linearGradient><radialGradient id="lensc"><stop offset="0" stopColor="#49e06a" /><stop offset="1" stopColor="#0a5030" stopOpacity=".2" /></radialGradient></defs>
      <circle cx="23" cy="23" r="23" fill="#0a0a0a" /><circle cx="23" cy="23" r="21.500" stroke="#777" opacity=".6" /><circle cx="23" cy="23" r="16.500" fill="url(#lens)" /><circle cx="23" cy="23" r="11" fill="url(#lensc)" /><circle cx="23" cy="23" r="6" stroke="#0c4020" opacity=".6" /><circle cx="19" cy="18" r="3" fill="#b8f0b0" opacity=".7" />
    </Svg>) },
  { name: "postman", dots: 0, icon: (
    <Svg s={46} box="0 0 46 46"><circle cx="23" cy="23" r="23" fill="#ff6c37" /><circle cx="33" cy="13.500" r="4" fill="#fff" /><path d="M30 16.500 24 19l-5 7-5 7-5 3 2 1.500 6-4.500 9-6 6-9-1.500-1z" fill="#fff" /><path d="M19 29l8-7M31 12l3 3" stroke="#ff6c37" /></Svg>) },
  { name: "editor", dots: 1, icon: (
    <Svg s={46} h={40} box="0 0 46 40">
      <path d="M2 3h33l2 34H0z" fill="#f4f4f0" /><path d="M0 36h37v2H0z" fill="#bbb" /><path d="M5 1v6M8 1v6M11 1v6M14 1v6M17 1v6M20 1v6M23 1v6M26 1v6M29 1v6M32 1v6" stroke="#444" strokeWidth="1.600" /><path d="M5 11h26M5 15h20M5 19h24M4 23h16M4 27h14" stroke="#bbb" strokeWidth="1.200" strokeDasharray="5 1.500" /><path d="M20 28 22 22 38 6l5 4L26 25z" fill="#f49a2c" /><path d="M20 28l2-6 4 3z" fill="#333" /><path d="M38 6l3-3 5 4-3 3z" fill="#d33" />
    </Svg>) },
  { name: "phpstorm", dots: 1, icon: (
    <Svg s={48} box="0 0 48 48">
      <defs><linearGradient id="ps" x1="0" y1="0" x2="1" y2=".8"><stop offset="0" stopColor="#ff318c" /><stop offset=".45" stopColor="#c04cf0" /><stop offset="1" stopColor="#7a50ff" /></linearGradient></defs>
      <path d="M1 9 9 0l17 4 16 1 5 14-4 8 5 12-18 9-17-7-9-3z" fill="url(#ps)" /><path d="M9 10h30v30H9z" fill="#000" /><text x="11" y="26" fontFamily="Open Sans" fontWeight="700" fontSize="17" textLength="23" lengthAdjust="spacingAndGlyphs" fill="#fff">PS</text><path d="M12 35h11" stroke="#fff" strokeWidth="2" />
    </Svg>) },
  { name: "viewer", dots: 1, icon: (
    <Svg s={46} box="0 0 46 46">
      <path d="M1 7 30 1l8 32L9 39z" fill="#f4f4f0" /><path d="M4 10 28 5l5 20L9 30z" fill="#7ba832" /><circle cx="16" cy="19" r="7" fill="#fff" /><circle cx="17" cy="17" r="3.500" fill="#f0981c" /><circle cx="26" cy="25" r="10.500" fill="#c9d4b8" fillOpacity=".75" stroke="#2c2e33" strokeWidth="3.500" /><path d="M21 22q5-6 10 2" stroke="#fff" strokeWidth="3" /><path d="M36 35l8 8" stroke="#c98a3a" strokeWidth="4" />
    </Svg>) },
];

function Dock() {
  return (
    <div className="relative h-[65px] shrink-0 bg-[#363530]">
      <div className="absolute inset-0 flex h-[62px]">
        <div className="w-[240px] bg-[#3b3a35]" />
        <div className="w-[260px] bg-[#42363b]" />
        <div className="w-[1180px] bg-[#666560]">
          <svg width="1180" height="62" fill="none" stroke="#4d4c48" strokeWidth="1.500">
            <path d="M20.500 0v29q0 8 8 8H1151q8 0 8-8V0" stroke="#5d5c57" strokeWidth="1" />
            <circle cx="41" cy="17" r="13" fill="#605f5a" stroke="none" /><path d="M36 17h10M41 12v10" />
            <rect x="77" y="12" width="10" height="10" /><path d="M87 15l5-3v10l-5-3" /><path d="M62 7v18M138 7v18" stroke="#5d5c57" />
            <path d="M110 22V14q0-3 3-3h4v11" />
            <circle cx="161" cy="17" r="7.500" /><path d="M157 19q4 4 8 0M158 14v1M164 14v1" /><circle cx="193" cy="17" r="7.500" /><path d="M215 26h20" />
            <path d="M1107 10l14 7-14 7v-5l8-2-8-2z" fill="#53524e" stroke="none" /><path d="M1129.500 6v20" stroke="#5d5c57" /><path d="M1138 16l3.500 3 3.500-3" />
          </svg>
          <span className="absolute left-[716px] top-[6px] text-[18px] leading-[24px] text-[#4b4a46]">Aa</span>
        </div>
        <div className="flex-1 bg-gradient-to-r from-[#31302b] via-[#3b3a34] to-[#33322d]" />
      </div>
      <div className="relative flex h-full">
        {dock.map((d) => (
          <div key={d.name} className="relative flex w-[66px] items-center justify-center">
            {d.active && <div className="absolute left-[2px] top-[2px] h-[62px] w-[62px] rounded-[4px] bg-[#625a5d]" />}
            <div className="relative">{d.icon}</div>
            <div className="absolute bottom-[1px] left-0 flex w-full justify-center gap-[2px]">
              {Array.from({ length: d.dots }, (_, i) => <div key={i} className="h-[6px] w-[6px] rounded-full bg-[#e95420]" />)}
            </div>
          </div>
        ))}
        <div className="ml-auto mr-[18px] mt-[18px] grid h-[30px] grid-cols-3 gap-[6px]">
          {Array.from({ length: 9 }, (_, i) => <div key={i} className="h-[6px] w-[6px] rounded-full bg-[#f0f0ec]" />)}
        </div>
      </div>
    </div>
  );
}

export default function App() {
  return (
    <div className="flex h-[1080px] w-[1920px] flex-col overflow-hidden bg-white font-['Noto_Sans',sans-serif]">
      <TopBar />
      <TabStrip />
      <Toolbar />
      <Bookmarks />
      <CourseHeader />
      <div className="flex h-[759px] shrink-0 font-['Liberation_Sans',sans-serif]">
        <Sidebar />
        <Player />
      </div>
      <div className="flex h-[41px] shrink-0 items-center justify-end border-t border-[#ccc] bg-white pr-[6px]">
        <div className="flex h-7 w-7 items-center justify-center rounded-[2px] border border-[#888] bg-[#f0f0f0]">
          <Svg s={12} h={11} box="0 0 12 11"><path d="M1 4V1h3M8 1h3v3M11 7v3H8M4 10H1V7" stroke="#444" strokeWidth="1.700" /></Svg>
        </div>
      </div>
      <Dock />
    </div>
  );
}
